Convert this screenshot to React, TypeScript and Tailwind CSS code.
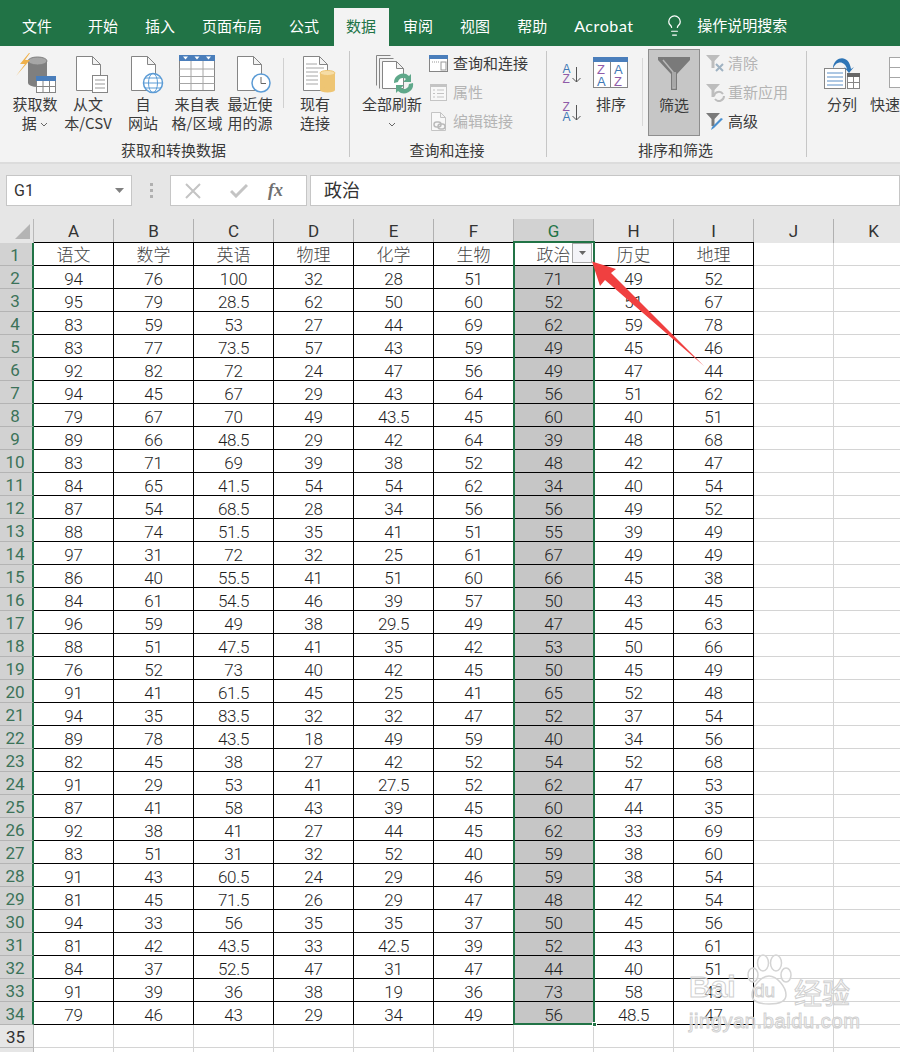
import { Lightbulb } from "lucide-react";
import type { ReactNode } from "react";

const cjk = "font-['Noto_Sans_CJK_SC','Noto_Sans',sans-serif]";
const num = "font-['Roboto','Noto_Sans_CJK_SC',sans-serif]";

const tabs = ["开始", "插入", "页面布局", "公式", "数据", "审阅", "视图", "帮助", "Acrobat"];
const columns = ["A", "B", "C", "D", "E", "F", "G", "H", "I", "J", "K"];
const heads = ["语文", "数学", "英语", "物理", "化学", "生物", "政治", "历史", "地理"];

const table = `94 76 100 32 28 51 71 49 52
95 79 28.5 62 50 60 52 51 67
83 59 53 27 44 69 62 59 78
83 77 73.5 57 43 59 49 45 46
92 82 72 24 47 56 49 47 44
94 45 67 29 43 64 56 51 62
79 67 70 49 43.5 45 60 40 51
89 66 48.5 29 42 64 39 48 68
83 71 69 39 38 52 48 42 47
84 65 41.5 54 54 62 34 40 54
87 54 68.5 28 34 56 56 49 52
88 74 51.5 35 41 51 55 39 49
97 31 72 32 25 61 67 49 49
86 40 55.5 41 51 60 66 45 38
84 61 54.5 46 39 57 50 43 45
96 59 49 38 29.5 49 47 45 63
88 51 47.5 41 35 42 53 50 66
76 52 73 40 42 45 50 45 49
91 41 61.5 45 25 41 65 52 48
94 35 83.5 32 32 47 52 37 54
89 78 43.5 18 49 59 40 34 56
82 45 38 27 42 52 54 52 68
91 29 53 41 27.5 52 62 47 53
87 41 58 43 39 45 60 44 35
92 38 41 27 44 45 62 33 69
83 51 31 32 52 40 59 38 60
91 43 60.5 24 29 46 59 38 54
81 45 71.5 26 29 47 48 42 54
94 33 56 35 35 37 50 45 56
81 42 43.5 33 42.5 39 52 43 61
84 37 52.5 47 31 47 44 40 51
91 39 36 38 19 36 73 58 43
79 46 43 29 34 49 56 48.5 47`
  .split("\n")
  .map((line) => line.split(" "));

function Icon44({ children }: { children: ReactNode }) {
  return (
    <svg width="44" height="44" viewBox="0 0 44 44" className="shrink-0">
      {children}
    </svg>
  );
}

function Page({ x }: { x: number }) {
  return (
    <path
      d={`M${x + 0.5} 6.5h16l8 8v26h-24zM${x + 16.5} 6.5v8h8`}
      fill="#fff"
      stroke="#858585"
    />
  );
}

function BigButton({ w, icon, lines, className = "" }: { w: number; icon: ReactNode; lines: ReactNode[]; className?: string }) {
  return (
    <div className={`flex flex-col items-center shrink-0 ${className}`} style={{ width: w }}>
      <div className="h-[44px] flex items-start justify-center mt-[4px]">{icon}</div>
      <div className="text-[15px] leading-[19px] text-center whitespace-nowrap text-[#3a3a3a]">
        {lines.map((line, i) => (
          <div key={i}>{line}</div>
        ))}
      </div>
    </div>
  );
}

function Chevron() {
  return (
    <svg width="8" height="5" viewBox="0 0 8 5" className="inline-block align-middle">
      <path d="M1 1l3 3 3-3" fill="none" stroke="#666" />
    </svg>
  );
}

function SmallRow({ icon, label, muted, w = 24 }: { icon: ReactNode; label: string; muted?: boolean; w?: number }) {
  return (
    <div className="h-[29px] flex items-center whitespace-nowrap text-[15px]">
      <div className="shrink-0" style={{ width: w }}>
        {icon}
      </div>
      <span className={muted ? "text-[#b4b4b4]" : "text-[#3a3a3a]"}>{label}</span>
    </div>
  );
}

function Funnel({ fill = "#7a7a7a" }: { fill?: string }) {
  return <path d="M1 1h14l-5.500 6v7h-3V7z" fill={fill} />;
}

function Group({ width, label, children }: { width: number; label: string; children: ReactNode }) {
  return (
    <div className="flex flex-col shrink-0" style={{ width }}>
      <div className="h-[94px] flex">{children}</div>
      <div className="h-[20px] pr-[2px] text-center text-[15px] leading-[20px] whitespace-nowrap text-[#3a3a3a]">{label}</div>
    </div>
  );
}

function GroupLine() {
  return <div className="w-px shrink-0 my-[5px] bg-[#c6c6c6]" />;
}

function SortArrow({ top, bottom, className }: { top: string; bottom: string; className: string }) {
  const color = (letter: string) => (letter === "A" ? "#3f78b5" : "#8f5ba8");
  return (
    <svg width="28" height="27" viewBox="0 0 28 27" className={className}>
      <text x="4.500" y="13" fontSize="12" fontFamily="Liberation Sans" fill={color(top)}>{top}</text>
      <text x="4.500" y="22.500" fontSize="12" fontFamily="Liberation Sans" fill={color(bottom)}>{bottom}</text>
      <path d="M18.500 7v15M14.500 18l4 4 4-4" fill="none" stroke="#555" />
    </svg>
  );
}

function Ribbon() {
  return (
    <div className={`h-[116px] bg-[#f3f3f3] flex ${cjk}`}>
      <Group width={349} label="获取和转换数据">
        <BigButton
          w={54}
          className="ml-[8px]"
          lines={["获取数", <>据 <Chevron /></>]}
          icon={
            <Icon44>
              <ellipse cx="24.500" cy="33" rx="9.500" ry="4" fill="#7f7f7f" />
              <rect x="15" y="11" width="19" height="22" fill="#7f7f7f" />
              <ellipse cx="24.500" cy="11" rx="9.500" ry="4" fill="#a6a6a6" stroke="#7f7f7f" />
              <rect x="23.500" y="26.500" width="19" height="16" fill="#fff" stroke="#858585" />
              <rect x="23" y="26" width="20" height="5" fill="#4a7ebb" />
              <path d="M23.500 36.500h19M30 31v12M36.500 31v12" stroke="#858585" fill="none" />
              <path d="M16 3L7 14h5L3 26l14-16h-5l5-7z" fill="#f0b14a" />
            </Icon44>
          }
        />
        <BigButton
          w={52}
          lines={["从文", "本/CSV"]}
          icon={
            <Icon44>
              <Page x={10} />
              <rect x="26.500" y="25.500" width="15" height="17" fill="#fff" stroke="#858585" />
              <path d="M29 30h10M29 34h10M29 38h10" stroke="#999" />
            </Icon44>
          }
        />
        <BigButton
          w={56}
          className="ml-px"
          lines={["自", "网站"]}
          icon={
            <Icon44>
              <Page x={10} />
              <circle cx="32" cy="33" r="9.500" fill="#fff" stroke="#5b9bd5" strokeWidth="1.500" />
              <ellipse cx="32" cy="33" rx="4.500" ry="9.500" fill="none" stroke="#5b9bd5" />
              <path d="M22.500 33h19M24 28h16M24 38h16" stroke="#5b9bd5" fill="none" />
            </Icon44>
          }
        />
        <BigButton
          w={52}
          lines={["来自表", "格/区域"]}
          icon={
            <Icon44>
              <rect x="4.500" y="5.500" width="35" height="35" fill="#fff" stroke="#858585" />
              <rect x="4" y="5" width="36" height="6" fill="#4a7ebb" />
              <path d="M4.500 19h35M4.500 26.500h35M4.500 33.500h35M16 11v29M28 11v29" stroke="#a6a6a6" fill="none" />
              <path d="M8 6.500h5l-2.500 3zM19.500 6.500h5l-2.500 3zM31 6.500h5l-2.500 3z" fill="#fff" />
            </Icon44>
          }
        />
        <BigButton
          w={54}
          lines={["最近使", "用的源"]}
          icon={
            <Icon44>
              <Page x={9} />
              <circle cx="33" cy="33" r="9" fill="#fff" stroke="#5b9bd5" strokeWidth="1.500" />
              <path d="M33 27v6.500h5" fill="none" stroke="#666" />
            </Icon44>
          }
        />
        <div className="w-px h-[50px] mt-[12px] ml-[6px] bg-[#d0d0d0]" />
        <BigButton
          w={56}
          className="ml-[3px]"
          lines={["现有", "连接"]}
          icon={
            <Icon44>
              <Page x={10} />
              <path d="M13 14h11M13 18h18M13 22h12M13 26h12M13 30h12M13 34h12" stroke="#a6a6a6" />
              <rect x="27" y="23" width="15" height="17" fill="#eec573" />
              <ellipse cx="34.500" cy="40" rx="7.500" ry="2.500" fill="#eec573" />
              <ellipse cx="34.500" cy="23" rx="7.500" ry="2.500" fill="#f6dda6" stroke="#eec573" />
            </Icon44>
          }
        />
      </Group>
      <GroupLine />
      <Group width={196} label="查询和连接">
        <BigButton
          w={72}
          className="ml-[6px]"
          lines={["全部刷新", <Chevron key="c" />]}
          icon={
            <Icon44>
              <path d="M6.500 5.500h14M6.500 5.500v30M9.500 8.500h14M9.500 8.500v30" fill="none" stroke="#858585" />
              <path d="M12.500 11.500h14l7 7v20h-21z M26.500 11.500v7h7" fill="#fff" stroke="#858585" />
              <path d="M24 33a9 9 0 0 1 15-7l2-2v8h-8l3-3a5 5 0 0 0-8 3zM43 33a9 9 0 0 1-15 8l-2 2v-8h8l-3 3a5 5 0 0 0 8-4z" fill="#5fa88a" />
            </Icon44>
          }
        />
        <div className="pt-[3px] ml-px">
          <SmallRow
            label="查询和连接"
            icon={
              <svg width="19" height="19" viewBox="0 0 19 19">
                <rect x="0.500" y="1.500" width="18" height="16" fill="#fff" stroke="#858585" />
                <rect x="0" y="1" width="19" height="4" fill="#4a7ebb" />
                <rect x="12" y="8" width="5" height="8" fill="#fff" stroke="#999" />
                <path d="M3 8h7" stroke="#999" strokeDasharray="1 1" />
              </svg>
            }
          />
          <SmallRow
            label="属性"
            muted
            icon={
              <svg width="19" height="19" viewBox="0 0 19 19">
                <rect x="1.500" y="1.500" width="16" height="16" fill="#f8f8f8" stroke="#c4c4c4" />
                <rect x="1" y="1" width="17" height="3" fill="#c4c4c4" />
                <path d="M8 7h7M8 10.500h7M8 14h7M4 7h2M4 10.500h2M4 14h2" stroke="#c4c4c4" />
              </svg>
            }
          />
          <SmallRow
            label="编辑链接"
            muted
            icon={
              <svg width="19" height="19" viewBox="0 0 19 19">
                <path d="M2.500 0.500h9l5 5v13h-14zM11.500 0.500v5h5" fill="#f8f8f8" stroke="#c4c4c4" />
                <rect x="5" y="10" width="7" height="5" rx="2.500" fill="none" stroke="#bbb" strokeWidth="1.500" />
                <rect x="9" y="12" width="7" height="5" rx="2.500" fill="none" stroke="#bbb" strokeWidth="1.500" />
              </svg>
            }
          />
        </div>
      </Group>
      <GroupLine />
      <Group width={259} label="排序和筛选">
        <div className="w-[28px] ml-[11px] shrink-0 flex flex-col">
          <SortArrow top="A" bottom="Z" className="mt-[14px]" />
          <SortArrow top="Z" bottom="A" className="mt-[11px]" />
        </div>
        <BigButton
          w={50}
          lines={["排序"]}
          icon={
            <Icon44>
              <rect x="4.500" y="7.500" width="34" height="30" fill="#fff" stroke="#858585" />
              <rect x="4" y="7" width="35" height="5" fill="#4a7ebb" />
              <path d="M21.500 12v26" stroke="#858585" />
              <text x="8" y="24" fontSize="13" fontFamily="Liberation Sans" fill="#8f5ba8">Z</text>
              <text x="8" y="36" fontSize="13" fontFamily="Liberation Sans" fill="#3f78b5">A</text>
              <text x="25" y="24" fontSize="13" fontFamily="Liberation Sans" fill="#3f78b5">A</text>
              <text x="25" y="36" fontSize="13" fontFamily="Liberation Sans" fill="#8f5ba8">Z</text>
            </Icon44>
          }
        />
        <div className="w-px h-[68px] mt-[12px] ml-[6px] bg-[#d8d8d8]" />
        <div className="w-[52px] h-[87px] mt-[3px] ml-[5px] shrink-0 flex flex-col items-center bg-[#c6c6c6] border border-[#8e8e8e]">
          <svg width="32" height="33" viewBox="0 0 32 33" className="mt-[7px]">
            <path d="M0 0h32v3L19 17v16h-6V17L0 3z" fill="#7a7a7a" />
            <path d="M5 3l10 12v16h2V15" fill="none" stroke="#b8b8b8" strokeWidth="1.500" />
          </svg>
          <span className="text-[15px] leading-[19px] mt-[5px] text-[#3a3a3a]">筛选</span>
        </div>
        <div className="pt-[3px] ml-[5px]">
          <SmallRow
            label="清除"
            muted
            w={23}
            icon={
              <svg width="20" height="19" viewBox="0 0 20 19">
                <Funnel fill="#bdbdbd" />
                <path d="M11 10l7 7M18 10l-7 7" stroke="#9fb2c2" strokeWidth="2" />
              </svg>
            }
          />
          <SmallRow
            label="重新应用"
            muted
            w={23}
            icon={
              <svg width="20" height="19" viewBox="0 0 20 19">
                <Funnel fill="#bdbdbd" />
                <path d="M9 13a5 5 0 0 1 9-2M19 13a5 5 0 0 1-9 3" fill="none" stroke="#bdbdbd" strokeWidth="2" />
              </svg>
            }
          />
          <SmallRow
            label="高级"
            w={23}
            icon={
              <svg width="20" height="19" viewBox="0 0 20 19">
                <Funnel />
                <path d="M18 7L9 16l-3 2 1-3 9-9z" fill="#4a90d0" />
              </svg>
            }
          />
        </div>
      </Group>
      <GroupLine />
      <div className="flex-1 overflow-hidden flex">
        <BigButton
          w={56}
          className="ml-[7px]"
          lines={["分列"]}
          icon={
            <Icon44>
              <rect x="4.500" y="18.500" width="21" height="20" fill="#fff" stroke="#858585" />
              <path d="M7 23h16M7 27h16M7 31h16M7 35h16" stroke="#5b8fc7" />
              <rect x="27.500" y="23.500" width="12" height="15" fill="#fff" stroke="#858585" />
              <rect x="27" y="23" width="13" height="4" fill="#666" />
              <path d="M27.500 32.500h12M33.500 27v11" stroke="#858585" />
              <path d="M13 17c2-11 16-13 18 2l3-2-5 6-5-6 3 2c-2-8-11-9-14 0z" fill="#2e75b6" />
            </Icon44>
          }
        />
        <BigButton
          w={60}
          lines={["快速填充"]}
          icon={
            <Icon44>
              <rect x="11.500" y="7.500" width="34" height="30" fill="#fff" stroke="#a6a6a6" />
              <path d="M11.500 17.500h34M11.500 27.500h34M22.500 7.500v30" stroke="#a6a6a6" />
              <rect x="23" y="28" width="21" height="9" fill="#e0e0e0" />
            </Icon44>
          }
        />
      </div>
    </div>
  );
}

function TitleTabs() {
  return (
    <div className={`h-[46px] bg-[#217346] flex items-end pl-[9.5px] text-white text-[15px] ${cjk}`}>
      <div className="h-[38px] px-[12.5px] leading-[35px] mr-[11px]">文件</div>
      <div className="flex gap-[2px]">
        {tabs.map((tab) => (
          <div
            key={tab}
            className={`h-[38px] px-[12.5px] leading-[35px] whitespace-nowrap ${
              tab === "数据" ? "bg-[#f3f3f3] text-[#217346]" : ""
            } ${tab === "Acrobat" ? "font-['Lato'] text-[16px] tracking-[0.6px]" : ""}`}
          >
            {tab}
          </div>
        ))}
      </div>
      <div className="h-[38px] flex items-center pb-[3px] ml-[17px]">
        <Lightbulb size={23} strokeWidth={1.3} />
        <span className="ml-[11px] whitespace-nowrap">操作说明搜索</span>
      </div>
    </div>
  );
}

function FormulaBar() {
  return (
    <div className="h-[57px] bg-[#e6e6e6] shadow-[inset_0_2px_0_#dcdcdc] pt-[13px] flex items-start">
      <div className={`w-[126px] h-[31px] ml-[6px] bg-white border border-[#c6c6c6] flex items-center pl-[7px] pr-[7px] justify-between text-[16px] text-[#333] ${num}`}>
        G1
        <svg width="9" height="5" viewBox="0 0 9 5">
          <path d="M0 0h9L4.500 5z" fill="#808080" />
        </svg>
      </div>
      <div className="w-[38px] h-[31px] flex flex-col items-center justify-center gap-[3px]">
        <div className="w-[3px] h-[3px] bg-[#b0b0b0]" />
        <div className="w-[3px] h-[3px] bg-[#b0b0b0]" />
        <div className="w-[3px] h-[3px] bg-[#b0b0b0]" />
      </div>
      <div className="w-[137px] h-[31px] bg-white border border-[#c6c6c6] flex items-center">
        <svg width="16" height="16" viewBox="0 0 16 16" className="ml-[14px]">
          <path d="M1 1l14 14M15 1L1 15" stroke="#c4c4c4" strokeWidth="2" />
        </svg>
        <svg width="18" height="15" viewBox="0 0 18 15" className="ml-[29px]">
          <path d="M1 8l5 5L17 2" fill="none" stroke="#c4c4c4" strokeWidth="3" />
        </svg>
        <span className="ml-[20px] font-['Liberation_Serif'] italic font-bold text-[18px] text-[#707070]">fx</span>
      </div>
      <div className={`flex-1 h-[31px] ml-[3px] bg-white border border-[#c6c6c6] pl-[13px] text-[18px] leading-[26px] text-[#333] ${cjk}`}>
        政治
      </div>
    </div>
  );
}

function ColumnHeader() {
  return (
    <div className="h-[24px] flex bg-[#e6e6e6]">
      <div className="w-[34px] shrink-0 flex items-end justify-end pb-[4px] pr-[3px] border-r border-[#b8b8b8]">
        <svg width="15" height="15" viewBox="0 0 15 15">
          <path d="M15 0v15H0z" fill="#b4b4b4" />
        </svg>
      </div>
      {columns.map((col) => (
        <div
          key={col}
          className={`w-[80px] shrink-0 text-center text-[17px] leading-[24px] border-r border-[#b0b0b0] ${num} ${
            col === "G" ? "bg-[#d2d2d2] text-[#217346]" : "text-[#333]"
          }`}
        >
          {col}
        </div>
      ))}
    </div>
  );
}

function RowLabel({ n, active }: { n?: number; active: boolean }) {
  return (
    <div
      className={`w-[34px] shrink-0 text-center pr-[2px] text-[17px] leading-[25px] border-b ${num} ${
        active
          ? "bg-[#d2d2d2] text-[#3c7259] border-b-[#b4b4b4] border-r-2 border-r-[#217346]"
          : "bg-[#e6e6e6] text-[#333] border-b-[#b8b8b8] border-r border-r-[#b8b8b8]"
      }`}
    >
      {n}
    </div>
  );
}

function Blank() {
  return <div className="w-[80px] shrink-0 border-r border-b border-[#d4d4d4]" />;
}

function Sheet() {
  return (
    <div className="relative flex-1 bg-white overflow-hidden">
      <ColumnHeader />
      <div className="absolute left-[34px] top-[23px] w-[720px] h-px bg-black" />
      <div className="flex h-[23px]">
        <RowLabel n={1} active />
        {heads.map((head) => (
          <div
            key={head}
            className={`w-[80px] shrink-0 text-center text-[17px] font-light leading-[22px] text-[#444] border-r border-b border-black ${cjk}`}
          >
            {head}
          </div>
        ))}
        <Blank />
        <Blank />
      </div>
      {table.map((row, r) => (
        <div key={r} className="flex h-[23px]">
          <RowLabel n={r + 2} active />
          {row.map((value, c) => (
            <div
              key={c}
              className={`w-[80px] shrink-0 text-center text-[17px] font-light tracking-[-0.3px] leading-[26px] text-[#1f1f1f] border-r border-b border-black ${num} ${
                c === 6 ? "bg-[#c6c6c6]" : ""
              }`}
            >
              {value}
            </div>
          ))}
          <Blank />
          <Blank />
        </div>
      ))}
      <div className="flex h-[23px]">
        <RowLabel n={35} active={false} />
        {columns.map((col) => (
          <Blank key={col} />
        ))}
      </div>
      <div className="flex h-[23px]">
        <RowLabel active={false} />
        {columns.map((col) => (
          <Blank key={col} />
        ))}
      </div>

      {/* selection frame round G1:G34 */}
      <div className="absolute left-[512.5px] top-[22px] w-[82px] h-[784px] border-2 border-[#217346]" />
      <div className="absolute left-[591.5px] top-[803px] w-[5px] h-[5px] bg-[#217346] border border-white" />

      {/* filter button */}
      <div className="absolute left-[572px] top-[24px] w-[20px] h-[20px] bg-[#f4f4f8] border border-[#a6a6a6] flex items-center justify-center">
        <svg width="7" height="4" viewBox="0 0 7 4">
          <path d="M0 0h7L3.500 4z" fill="#666" />
        </svg>
      </div>

      {/* red arrow */}
      <svg className="absolute left-0 top-0" width="900" height="833" viewBox="0 219 900 833">
        <path d="M592 261.500l24 7.500-5 4 93 93-99-86-5 6z" fill="#f04040" />
      </svg>

      <Watermark />
    </div>
  );
}

function Watermark() {
  const ghost = "[-webkit-text-stroke:1px_#d0d0d0] text-white/60";
  return (
    <div className="absolute left-[689px] top-[735px] w-[165px] h-[80px]">
      <svg className="absolute left-[56px] top-0" width="48" height="52" viewBox="0 0 48 52">
        <g fill="#ffffff99" stroke="#d4d4d4" strokeWidth="1.500">
          <ellipse cx="8" cy="21" rx="5" ry="7" />
          <ellipse cx="18" cy="9" rx="5.500" ry="8" />
          <ellipse cx="31" cy="9" rx="5.500" ry="8" />
          <ellipse cx="41" cy="21" rx="5" ry="7" />
          <path d="M24 22c8 0 17 11 17 19 0 7-8 9-17 9S7 48 7 41c0-8 9-19 17-19z" />
        </g>
      </svg>
      <span className={`absolute left-0 top-[17px] text-[30px] font-bold leading-[32px] font-['Liberation_Sans'] ${ghost}`}>Bai</span>
      <span className={`absolute left-[65px] top-[26px] text-[19px] leading-[22px] font-['Liberation_Sans'] ${ghost}`}>du</span>
      <span className={`absolute left-[105px] top-[22px] text-[28px] leading-[32px] ${cjk} ${ghost}`}>经验</span>
      <span className={`absolute left-0 top-[56px] text-[20px] leading-[22px] tracking-[0.6px] font-['Liberation_Sans'] whitespace-nowrap ${ghost}`}>jingyan.baidu.com</span>
    </div>
  );
}

export default function App() {
  return (
    <div className="w-[900px] h-[1052px] flex flex-col overflow-hidden bg-white">
      <TitleTabs />
      <Ribbon />
      <FormulaBar />
      <Sheet />
    </div>
  );
}
